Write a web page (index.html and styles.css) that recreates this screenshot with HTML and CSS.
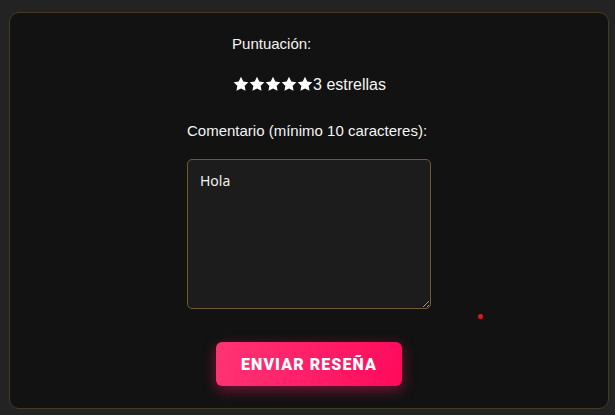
FILE: index.html
```html
<!DOCTYPE html>
<html lang="es">
<head>
<meta charset="utf-8">
<title>Reseña</title>
<link rel="stylesheet" href="styles.css">
</head>
<body>
<div class="card">
  <div class="rating">
    <div class="label">Puntuación:</div>
    <div class="stars-row">
      <span class="stars">
        <svg viewBox="0 0 24 24"><path d="M12 1.2l3.4 6.9 7.6 1.1-5.5 5.4 1.3 7.6L12 18.6l-6.8 3.6 1.3-7.6L1 9.2l7.6-1.1z"/></svg>
        <svg viewBox="0 0 24 24"><path d="M12 1.2l3.4 6.9 7.6 1.1-5.5 5.4 1.3 7.6L12 18.6l-6.8 3.6 1.3-7.6L1 9.2l7.6-1.1z"/></svg>
        <svg viewBox="0 0 24 24"><path d="M12 1.2l3.4 6.9 7.6 1.1-5.5 5.4 1.3 7.6L12 18.6l-6.8 3.6 1.3-7.6L1 9.2l7.6-1.1z"/></svg>
        <svg viewBox="0 0 24 24"><path d="M12 1.2l3.4 6.9 7.6 1.1-5.5 5.4 1.3 7.6L12 18.6l-6.8 3.6 1.3-7.6L1 9.2l7.6-1.1z"/></svg>
        <svg viewBox="0 0 24 24"><path d="M12 1.2l3.4 6.9 7.6 1.1-5.5 5.4 1.3 7.6L12 18.6l-6.8 3.6 1.3-7.6L1 9.2l7.6-1.1z"/></svg>
      </span>
      <span class="count">3 estrellas</span>
    </div>
  </div>
  <div class="comment">
    <label class="label" for="c">Comentario (mínimo 10 caracteres):</label>
    <textarea id="c" class="box">Hola</textarea>
  </div>
  <button class="submit">ENVIAR RESEÑA</button>
  <span class="dot"></span>
</div>
</body>
</html>
```

FILE: styles.css
```css
html, body {
  margin: 0;
  padding: 0;
  background: #232323;
}
body {
  padding: 12px 7px 7px 9px;
  font-family: "Liberation Sans", Arial, sans-serif;
  color: #f4f4f4;
}
.card {
  position: relative;
  box-sizing: border-box;
  width: 600px;
  height: 397px;
  background: #121212;
  border: 1px solid #433a20;
  border-radius: 10px;
  display: flex;
  flex-direction: column;
  align-items: center;
  padding-top: 22px;
}
.rating {
  display: flex;
  flex-direction: column;
  align-items: flex-start;
}
.label {
  font-size: 15px;
  line-height: 18px;
  display: block;
}
.stars-row {
  display: flex;
  align-items: center;
  margin-top: 22px;
  height: 18px;
  padding-left: 1px;
}
.stars {
  display: flex;
}
.stars svg {
  width: 16px;
  height: 16px;
  fill: #ffffff;
  display: block;
}
.count {
  font-size: 16px;
  line-height: 18px;
  margin-top: 2px;
}
.comment {
  display: flex;
  flex-direction: column;
  margin-top: 29px;
}
.box {
  box-sizing: border-box;
  margin-top: 19px;
  width: 244px;
  height: 150px;
  background: #1c1c1c;
  border: 1px solid #6e5d2c;
  border-radius: 5px;
  color: #f0f0f0;
  font-family: "Noto Sans", sans-serif;
  font-size: 14px;
  line-height: 20px;
  padding: 11px 12px;
  resize: vertical;
  outline: none;
}
.submit {
  margin-top: 33px;
  width: 186px;
  height: 44px;
  border: none;
  border-radius: 6px;
  background: linear-gradient(100deg, #ff3474 0%, #ff0a5c 100%);
  box-shadow: 0 4px 14px rgba(255, 20, 100, 0.45);
  color: #ffffff;
  font-family: "Roboto", sans-serif;
  font-weight: 900;
  font-size: 16px;
  letter-spacing: 1.1px;
  padding: 0;
}
.dot {
  position: absolute;
  left: 468px;
  top: 301px;
  width: 5px;
  height: 5px;
  border-radius: 50%;
  background: #e8131f;
}
```
